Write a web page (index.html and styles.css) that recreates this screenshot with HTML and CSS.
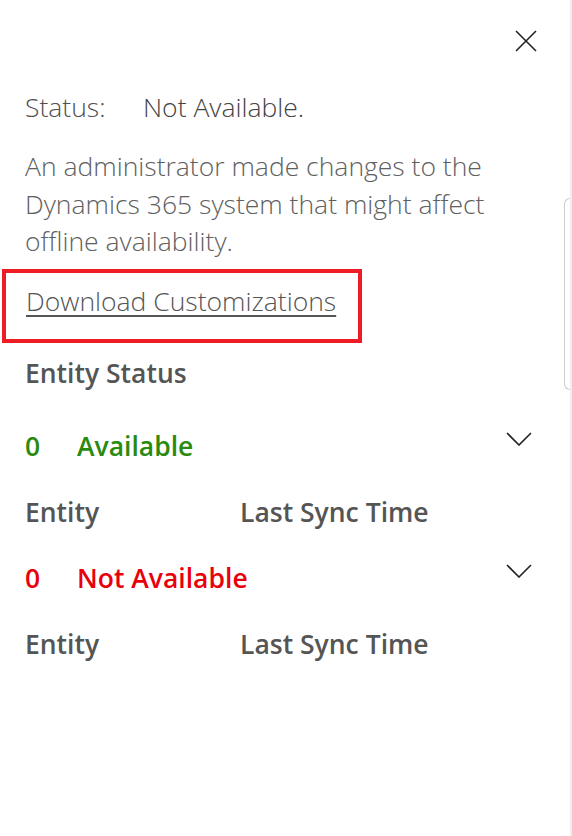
FILE: index.html
```html
<!DOCTYPE html>
<html>
<head>
<meta charset="utf-8">
<link rel="stylesheet" href="styles.css">
</head>
<body>
<div class="panel">
  <div class="topbar">
    <svg class="close" width="22" height="22" viewBox="0 0 22 22"><path d="M1 1 L21 21 M21 1 L1 21" stroke="#222" stroke-width="1.6" fill="none"/></svg>
  </div>
  <div class="status"><span class="label">Status:</span><span>Not Available.</span></div>
  <p class="message">An administrator made changes to the Dynamics 365 system that might affect offline availability.</p>
  <div class="highlight"><a class="link" href="#">Download Customizations</a></div>
  <h2 class="heading">Entity Status</h2>
  <div class="group ok">
    <span class="count">0</span><span class="name">Available</span>
    <svg class="chev" width="26" height="14" viewBox="0 0 26 14"><path d="M1 1 L13 13 L25 1" stroke="#222" stroke-width="1.6" fill="none"/></svg>
  </div>
  <div class="cols"><span class="col1">Entity</span><span>Last Sync Time</span></div>
  <div class="group bad">
    <span class="count">0</span><span class="name">Not Available</span>
    <svg class="chev" width="26" height="14" viewBox="0 0 26 14"><path d="M1 1 L13 13 L25 1" stroke="#222" stroke-width="1.6" fill="none"/></svg>
  </div>
  <div class="cols"><span class="col1">Entity</span><span>Last Sync Time</span></div>
  <div class="scrollthumb"></div>
</div>
</body>
</html>
```

FILE: styles.css
```css
html, body { margin: 0; padding: 0; background: #fff; }
body { width: 572px; height: 836px; overflow: hidden; }
.panel {
  position: relative;
  height: 836px;
  box-sizing: border-box;
  border-right: 2px solid #eeeeee;
  font-family: "Open Sans", "Noto Sans", sans-serif;
  color: #505050;
}
.topbar { display: flex; justify-content: flex-end; padding: 30px 33px 0 0; height: 22px; }
.status { display: flex; margin-top: 39px; padding-left: 25px; font-size: 26.5px; font-weight: 300; line-height: 32px; color: #444; }
.status .label { width: 118px; color: #505050; }
.message { margin: 25px 0 0; width: 470px; padding-left: 25px; font-size: 26.5px; font-weight: 300; line-height: 37.5px; color: #606060; }
.highlight { margin: 8px 0 0 2px; width: 332px; height: 54px; border: 4px solid #ee1c25; padding: 12px 0 0 20px; box-sizing: content-box; }
.link { font-size: 26.5px; font-weight: 300; line-height: 32px; color: #555; text-decoration: underline; text-decoration-thickness: 2px; text-underline-offset: 4px; }
.heading { margin: 14px 0 0; padding-left: 25px; font-size: 26.5px; font-weight: 600; line-height: 32px; color: #555; }
.group { display: flex; margin-top: 41px; padding: 0 38px 0 25px; font-size: 26.5px; font-weight: 600; line-height: 32px; }
.group + .cols + .group { margin-top: 34px; }
.group .count { width: 52px; }
.group .name { flex: 1; }
.group .chev { margin-top: 2px; }
.ok { color: #2a8a0e; }
.bad { color: #e8000b; }
.cols { display: flex; margin-top: 34px; padding-left: 25px; font-size: 26.5px; font-weight: 600; line-height: 32px; color: #555; }
.cols .col1 { width: 215px; }
.scrollthumb { position: absolute; right: 0; top: 198px; width: 5px; height: 190px; border: 1px solid #ccc; border-right: none; border-radius: 6px 0 0 6px; }
```
